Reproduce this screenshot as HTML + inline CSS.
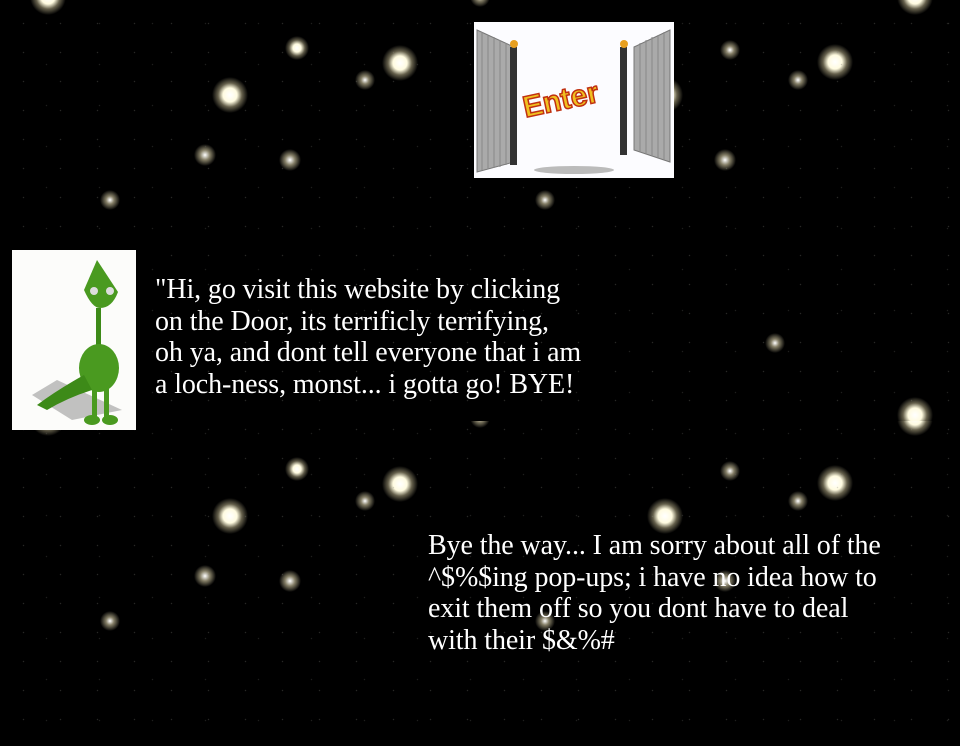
<!DOCTYPE html>
<html><head><meta charset="utf-8">
<style>
html,body{margin:0;padding:0;width:960px;height:746px;overflow:hidden;background:#000;}
body{position:relative;font-family:"Liberation Serif",serif;color:#fff;}
.sky{position:absolute;left:0;top:0;width:960px;height:746px;
background-image:
radial-gradient(circle at 297px 48px,#fff 0,#fffbe0 4px,rgba(200,190,150,.45) 8px,transparent 12px),
radial-gradient(circle at 400px 63px,#fff 0,#fffbe0 7px,rgba(200,190,150,.5) 12px,transparent 18px),
radial-gradient(circle at 365px 80px,#fff 0,rgba(220,210,170,.6) 4px,transparent 10px),
radial-gradient(circle at 230px 95px,#fff 0,#fffbe0 7px,rgba(200,190,150,.5) 12px,transparent 18px),
radial-gradient(circle at 730px 50px,#fff 0,rgba(220,210,170,.6) 4px,transparent 10px),
radial-gradient(circle at 835px 62px,#fff 0,#fffbe0 7px,rgba(200,190,150,.5) 12px,transparent 18px),
radial-gradient(circle at 798px 80px,#fff 0,rgba(220,210,170,.6) 4px,transparent 10px),
radial-gradient(circle at 665px 95px,#fff 0,#fffbe0 7px,rgba(200,190,150,.5) 12px,transparent 18px),
radial-gradient(circle at 205px 155px,#fff 0,rgba(220,210,170,.6) 5px,transparent 11px),
radial-gradient(circle at 290px 160px,#fff 0,rgba(220,210,170,.6) 5px,transparent 11px),
radial-gradient(circle at 725px 160px,#fff 0,rgba(220,210,170,.6) 5px,transparent 11px),
radial-gradient(circle at 110px 200px,#fff 0,rgba(220,210,170,.6) 4px,transparent 10px),
radial-gradient(circle at 545px 200px,#fff 0,rgba(220,210,170,.6) 4px,transparent 10px),
radial-gradient(circle at 775px 343px,#fff 0,rgba(220,210,170,.6) 4px,transparent 10px),
radial-gradient(circle at 915px 415px,#fff 0,#fffbe0 7px,rgba(200,190,150,.5) 12px,transparent 18px),
radial-gradient(circle at 915px -3px,#fff 0,#fffbe0 7px,rgba(200,190,150,.5) 12px,transparent 18px),
radial-gradient(circle at 48px -3px,#fff 0,#fffbe0 7px,rgba(200,190,150,.5) 12px,transparent 18px),
radial-gradient(circle at 480px -3px,#fff 0,rgba(220,210,170,.6) 4px,transparent 10px);
background-size:960px 421px;background-repeat:repeat-y;}
.dots{position:absolute;left:0;top:0;width:960px;height:746px;
background-image:radial-gradient(circle,#8a8a80 0,transparent 1px),radial-gradient(circle,#6a6a66 0,transparent 1px);
background-size:37px 29px,53px 41px;background-position:5px 9px,20px 3px;opacity:.45;}
.gate{position:absolute;left:474px;top:22px;width:200px;height:156px;background:#fcfcff;overflow:hidden;}
.lizard{position:absolute;left:12px;top:250px;width:124px;height:180px;background:#fcfcfa;overflow:hidden;}
.t1{position:absolute;left:155px;top:274px;font-size:28px;line-height:31.7px;white-space:nowrap;letter-spacing:-0.1px;}
.t2{position:absolute;left:428px;top:530px;font-size:28px;line-height:31.7px;white-space:nowrap;letter-spacing:-0.1px;}
</style></head><body>
<div class="sky"></div>
<div class="dots"></div>
<div class="gate">
<svg width="200" height="156" viewBox="0 0 200 156">
<g fill="#aaa" stroke="#777" stroke-width="1">
<polygon points="3,8 40,25 40,140 3,150"/>
<polygon points="196,8 160,25 160,128 196,140"/>
</g>
<g stroke="#888" stroke-width="1">
<line x1="8" y1="10" x2="8" y2="148"/><line x1="14" y1="13" x2="14" y2="147"/><line x1="20" y1="15" x2="20" y2="146"/><line x1="26" y1="18" x2="26" y2="145"/><line x1="32" y1="21" x2="32" y2="143"/>
<line x1="190" y1="10" x2="190" y2="138"/><line x1="184" y1="13" x2="184" y2="136"/><line x1="178" y1="15" x2="178" y2="134"/><line x1="172" y1="18" x2="172" y2="132"/><line x1="166" y1="21" x2="166" y2="130"/>
</g>
<rect x="36" y="25" width="7" height="118" fill="#333"/>
<rect x="146" y="25" width="7" height="108" fill="#333"/>
<circle cx="40" cy="22" r="4" fill="#e8a020"/><circle cx="150" cy="22" r="4" fill="#e8a020"/>
<ellipse cx="100" cy="148" rx="40" ry="4" fill="#bbb"/>
<text x="48" y="86" transform="rotate(-12 95 75)" font-family="Liberation Sans,sans-serif" font-weight="bold" font-size="30" fill="#f0c020" stroke="#c03010" stroke-width="1.5">Enter</text>
</svg>
</div>
<div class="lizard">
<svg width="124" height="180" viewBox="0 0 124 180">
<polygon points="20,145 45,130 110,160 60,170" fill="#999" opacity=".6"/>
<path d="M85 10 L72 40 Q80 58 88 58 Q100 58 106 42 Z" fill="#4a9a20"/>
<circle cx="82" cy="41" r="4" fill="#ddd"/><circle cx="98" cy="41" r="4" fill="#ddd"/>
<rect x="84" y="58" width="5" height="40" fill="#3d8a18"/>
<ellipse cx="87" cy="118" rx="20" ry="24" fill="#4a9a20"/>
<path d="M72 125 Q45 140 25 155 L35 160 Q55 148 80 140 Z" fill="#3d8a18"/>
<rect x="80" y="138" width="5" height="30" fill="#4a9a20"/><rect x="92" y="138" width="5" height="30" fill="#4a9a20"/>
<ellipse cx="80" cy="170" rx="8" ry="5" fill="#4a9a20"/><ellipse cx="98" cy="170" rx="8" ry="5" fill="#4a9a20"/>
</svg>
</div>
<div class="t1">"Hi, go visit this website by clicking<br>on the Door, its terrificly terrifying,<br>oh ya, and dont tell everyone that i am<br>a loch-ness, monst... i gotta go! BYE!</div>
<div class="t2">Bye the way... I am sorry about all of the<br>^$%$ing pop-ups; i have no idea how to<br>exit them off so you dont have to deal<br>with their $&amp;%#</div>
</body></html>
